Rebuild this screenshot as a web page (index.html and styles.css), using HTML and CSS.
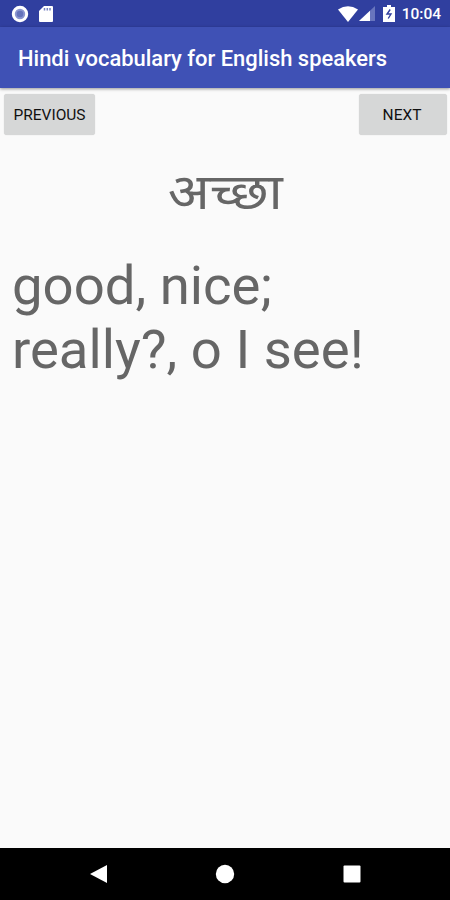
FILE: index.html
```html
<!DOCTYPE html>
<html lang="en">
<head>
    <meta charset="UTF-8">
    <meta name="viewport" content="width=device-width, initial-scale=1.0">
    <title>Hindi vocabulary for English speakers</title>
    <link rel="stylesheet" href="styles.css">
</head>
<body>
    <div class="status-bar">
        <svg class="record" width="18" height="18" viewBox="0 0 18 18">
            <circle cx="9" cy="9" r="6.700" fill="#8b96d0" stroke="#fff" stroke-width="3"/>
            <circle cx="9" cy="9" r="3.300" fill="#6573bb"/>
        </svg>
        <svg class="sd-card" width="14" height="16" viewBox="0 0 14 16">
            <path d="M5 0h8q1 0 1 1v14q0 1-1 1H1q-1 0-1-1V5z" fill="#fff"/>
            <path d="M5.500 2v2.500M8.300 2v2.500M11 2v2.500" stroke="#7682c2" stroke-width="1.5"/>
        </svg>
        <span class="spacer"></span>
        <svg class="wifi" width="20" height="16" viewBox="0 0 20 16">
            <path d="M0 3.500Q10-3 20 3.500L10 16z" fill="#fff"/>
        </svg>
        <svg class="signal" width="16" height="15" viewBox="0 0 16 15">
            <path d="M16 0v15H0z" fill="#6875bd"/>
            <path d="M11 4.700V15H0z" fill="#fff"/>
        </svg>
        <svg class="battery" width="12" height="17" viewBox="0 0 12 17">
            <path d="M4 0h4v2h4v15H0V2h4z" fill="#fff"/>
            <path d="M7.200 4.500L4 9h4L5.200 13.500" fill="none" stroke="#303f9f" stroke-width="1.400"/>
        </svg>
        <span class="clock">10:04</span>
    </div>
    <header class="app-bar">
        <h1>Hindi vocabulary for English speakers</h1>
    </header>
    <main>
        <div class="buttons">
            <button class="previous">PREVIOUS</button>
            <button class="next">NEXT</button>
        </div>
        <div class="word" lang="hi">अच्छा</div>
        <div class="meaning">good, nice;<br>really?, o I see!</div>
    </main>
    <nav class="nav-bar">
        <svg width="20" height="20" viewBox="0 0 20 20"><path d="M19 1v18L2 10z" fill="#fff"/></svg>
        <svg width="20" height="20" viewBox="0 0 20 20"><circle cx="10" cy="10" r="9.200" fill="#fff"/></svg>
        <svg width="20" height="20" viewBox="0 0 20 20"><rect x="1.500" y="1.500" width="17" height="17" rx="1" fill="#fff"/></svg>
    </nav>
</body>
</html>
```
FILE: styles.css
```css
body {
    margin: 0;
    height: 100vh;
    display: flex;
    flex-direction: column;
    background: #fafafa;
    font-family: Roboto, "Noto Sans", sans-serif;
    overflow: hidden;
}

.status-bar {
    display: flex;
    align-items: center;
    height: 27px;
    padding: 0 9px 0 11px;
    background: #303f9f;
    color: #fff;
}

.sd-card {
    margin-left: 10px;
}

.spacer {
    flex: 1;
}

.signal {
    margin-left: 1px;
}

.battery {
    margin: 0 7px 0 8px;
}

.clock {
    padding-top: 1px;
    font-size: 15.5px;
    font-weight: 500;
}

.app-bar {
    display: flex;
    align-items: center;
    height: 60px;
    padding: 1px 18px 0;
    background: #3f51b5;
    box-shadow: 0 1px 3px rgba(0, 0, 0, 0.4);
}

h1 {
    margin: 0;
    color: #fff;
    font-size: 21.95px;
    font-weight: 500;
    white-space: nowrap;
}

main {
    flex: 1;
    color: #666;
}

.buttons {
    display: flex;
    justify-content: space-between;
    padding: 6px 3px 0 4px;
}

button {
    height: 41px;
    padding: 0;
    border: none;
    border-radius: 3px;
    background: #d6d7d7;
    box-shadow: 0 0 1px rgba(0, 0, 0, 0.2);
    color: #111;
    font-family: inherit;
    font-size: 15.5px;
    font-weight: 400;
}

.previous {
    width: 91px;
}

.next {
    width: 88px;
    padding-right: 2px;
}

.word {
    width: fit-content;
    height: 118px;
    margin: 0 auto;
    line-height: 115px;
    font-size: 50px;
    transform: scaleX(1.1);
}

.meaning {
    padding-left: 12px;
    font-size: 54.5px;
    line-height: 64px;
    white-space: nowrap;
}

.nav-bar {
    display: flex;
    justify-content: center;
    align-items: center;
    gap: 107px;
    height: 52px;
    background: #000;
}
```
